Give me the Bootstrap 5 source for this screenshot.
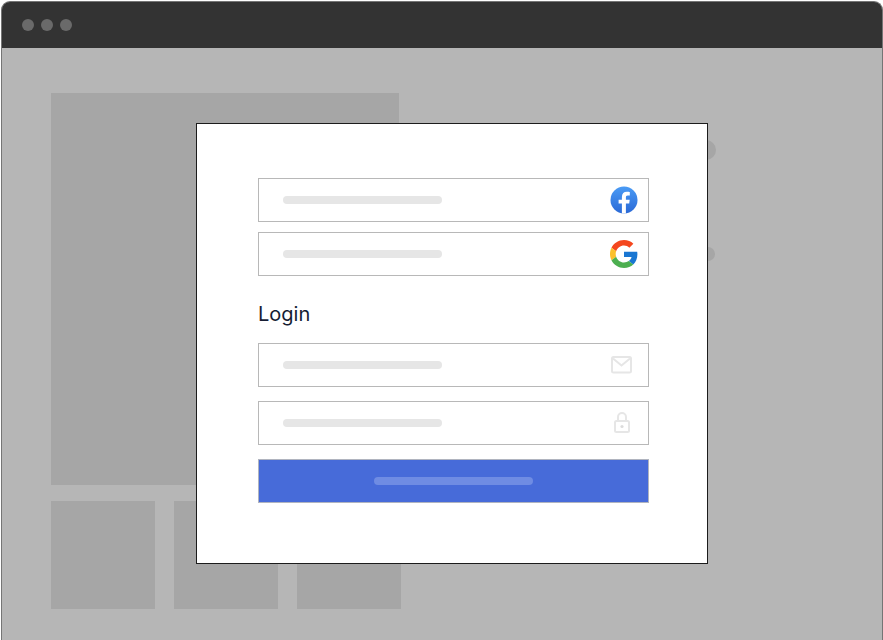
<!DOCTYPE html>
<html lang="en">

<head>
  <meta charset="utf-8">
  <meta name="viewport" content="width=device-width, initial-scale=1">
  <title>Login modal</title>
  <link href="https://cdn.jsdelivr.net/npm/bootstrap@5.3.6/dist/css/bootstrap.min.css" rel="stylesheet">
  <style>
    html, body { height: 640px; overflow: hidden; background: #fff; }
    .win { height: 641px; margin: 1px 0 0 1px; border: 1px solid #757575; border-bottom: 0; border-radius: 9px 9px 0 0; overflow: hidden; background: #b6b6b6; position: relative; }
    .win-bar { height: 46px; background: #333; padding-left: 20px; gap: 7px; }
    .win-dot { width: 12px; height: 12px; border-radius: 50%; background: #6a6a6a; }
    .win-body { padding: 45px 0 0 49px; gap: 16px; }
    .bg-main { width: 348px; height: 392px; background: #a6a6a6; }
    .bg-thumbs { gap: 19.5px; }
    .bg-thumb { width: 103.5px; height: 108px; background: #a6a6a6; }
    .bg-side { padding: 92px 0 0 295px; }
    .bg-circle { border-radius: 50%; background: #a6a6a6; }
    .bg-circle.big { width: 20px; height: 20px; }
    .bg-circle.tiny { width: 14px; height: 14px; margin: 87px 0 0 5px; }
    .login-modal { position: absolute; left: 194px; top: 121px; width: 512px; height: 441px; background: #fff; border: 1px solid #1c1c1c; padding: 54px 58px 0 61px; }
    .fake-input { height: 44px; border: 1px solid #b8b8b8; padding: 0 10px 0 24px; background: #fff; }
    .fake-line { width: 159px; height: 8px; border-radius: 4px; background: #e6e6e6; }
    .login-title { font-family: Inter, "Liberation Sans", sans-serif; font-size: 20px; font-weight: 400; line-height: 24px; color: #161d33; margin: 26px 0 17px; }
    .fake-submit { height: 44px; background: #476bd9; border: 1px solid #b0b4bf; }
    .fake-submit .fake-line { background: #6f8ce3; }
    .mb-10 { margin-bottom: 10px; }
    .mb-14 { margin-bottom: 14px; }
  </style>
</head>

<body>
  <div class="win">
    <div class="win-bar d-flex align-items-center">
      <span class="win-dot"></span>
      <span class="win-dot"></span>
      <span class="win-dot"></span>
    </div>
    <div class="d-flex">
      <div class="win-body d-flex flex-column">
        <div class="bg-main"></div>
        <div class="bg-thumbs d-flex">
          <div class="bg-thumb"></div>
          <div class="bg-thumb"></div>
          <div class="bg-thumb"></div>
        </div>
      </div>
      <div class="bg-side d-flex flex-column">
        <div class="bg-circle big"></div>
        <div class="bg-circle tiny"></div>
      </div>
    </div>

    <div class="login-modal">
      <div class="fake-input d-flex align-items-center justify-content-between mb-10">
        <span class="fake-line"></span>
        <svg width="28" height="28" viewBox="0 0 28 28">
          <defs>
            <linearGradient id="fbGrad" x1="0" y1="0" x2="0" y2="1">
              <stop offset="0" stop-color="#4a9bf5" />
              <stop offset="1" stop-color="#2a69d6" />
            </linearGradient>
          </defs>
          <circle cx="14" cy="14" r="13.5" fill="url(#fbGrad)" />
          <path fill="#fff" d="M11.9 27.4V17.6H8.6v-3.8h3.3v-2.9c0-3.3 2-5.1 4.9-5.1 1.4 0 2.6.1 3 .2v3.4h-2c-1.6 0-1.9.8-1.9 1.9v2.5h3.8l-.5 3.8h-3.3v9.8z" />
        </svg>
      </div>
      <div class="fake-input d-flex align-items-center justify-content-between">
        <span class="fake-line"></span>
        <svg width="28" height="28" viewBox="0 0 48 48">
          <path fill="#f4471e" d="M24 9.5c3.54 0 6.71 1.22 9.21 3.6l6.85-6.85C35.9 2.38 30.47 0 24 0 14.62 0 6.51 5.38 2.56 13.22l7.98 6.19C12.43 13.72 17.74 9.5 24 9.5z" />
          <path fill="#1976d2" d="M46.98 24.55c0-1.57-.15-3.09-.38-4.55H24v9.02h12.94c-.58 2.96-2.26 5.48-4.78 7.18l7.73 6c4.51-4.18 7.09-10.36 7.09-17.65z" />
          <path fill="#fbc02d" d="M10.53 28.59c-.48-1.45-.76-2.99-.76-4.59s.27-3.14.76-4.59l-7.98-6.19C.92 16.46 0 20.12 0 24c0 3.88.92 7.54 2.56 10.78l7.97-6.19z" />
          <path fill="#4caf50" d="M24 48c6.48 0 11.93-2.13 15.89-5.81l-7.73-6c-2.15 1.45-4.92 2.3-8.16 2.3-6.26 0-11.57-4.22-13.47-9.91l-7.98 6.19C6.51 42.62 14.62 48 24 48z" />
        </svg>
      </div>

      <h2 class="login-title">Login</h2>

      <div class="fake-input d-flex align-items-center justify-content-between mb-14">
        <span class="fake-line"></span>
        <svg width="28" height="28" viewBox="0 0 28 28" fill="none" stroke="#e6e6e6" stroke-width="2">
          <rect x="2" y="6" width="19" height="15.5" rx="1.5" />
          <path d="M3 7.5l8.5 7 8.5-7" />
        </svg>
      </div>
      <div class="fake-input d-flex align-items-center justify-content-between mb-14">
        <span class="fake-line"></span>
        <svg width="28" height="28" viewBox="0 0 28 28" fill="none" stroke="#e6e6e6" stroke-width="2">
          <rect x="5" y="12" width="14" height="11" rx="1.5" />
          <path d="M8 12V8a4 4 0 0 1 8 0v4" />
          <circle cx="12" cy="17.5" r="1.6" fill="#dcdcdc" stroke="none" />
        </svg>
      </div>
      <div class="fake-submit d-flex align-items-center justify-content-center">
        <span class="fake-line"></span>
      </div>
    </div>
  </div>

  <script src="https://cdn.jsdelivr.net/npm/bootstrap@5.3.6/dist/js/bootstrap.bundle.min.js"></script>
</body>

</html>
